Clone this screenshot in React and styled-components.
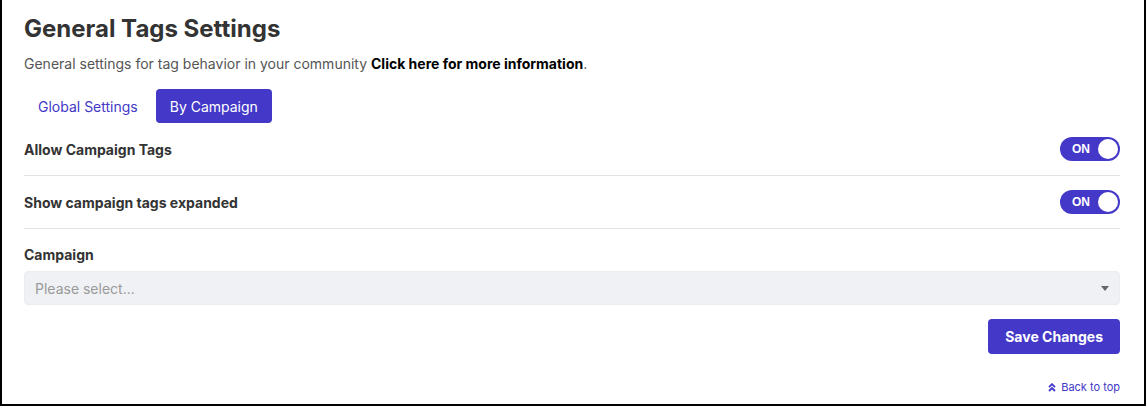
import styled, { createGlobalStyle } from "styled-components";
import { useState } from "react";

const GlobalStyle = createGlobalStyle`
  html, body {
    margin: 0;
    padding: 0;
    background: #fff;
  }
  body {
    font-family: "Inter", "Liberation Sans", sans-serif;
    color: #333;
  }
  * {
    box-sizing: border-box;
  }
`;

const Frame = styled.div`
  width: 1146px;
  height: 406px;
  border: 2px solid #000;
  border-top: none;
  padding: 0 24px 0 22px;
  display: flex;
  flex-direction: column;
`;

const Title = styled.h1`
  margin: 14px 0 0;
  font-size: 24px;
  line-height: 30px;
  font-weight: 700;
  color: #333;
`;

const Subtitle = styled.p`
  margin: 11px 0 0;
  font-size: 14px;
  line-height: 18px;
  color: #555;

  a {
    color: #000;
    font-weight: 700;
    text-decoration: none;
  }
`;

const Tabs = styled.div`
  display: flex;
  gap: 4px;
  margin-top: 16px;
`;

const Tab = styled.button`
  height: 34px;
  padding: 0 14px;
  border: none;
  border-radius: 4px;
  font-family: inherit;
  font-size: 14px;
  cursor: pointer;
  background: ${(p) => (p.$active ? "#4338c8" : "transparent")};
  color: ${(p) => (p.$active ? "#fff" : "#4338c8")};
`;

const Row = styled.div`
  display: flex;
  align-items: center;
  justify-content: space-between;
  height: 53px;
  border-bottom: 1px solid #e2e2e2;
`;

const Label = styled.span`
  font-size: 14px;
  font-weight: 700;
  color: #333;
`;

const Toggle = styled.button`
  width: 60px;
  height: 24px;
  border-radius: 12px;
  border: none;
  background: #4338c8;
  display: flex;
  align-items: center;
  justify-content: space-between;
  padding: 0 2px 0 12px;
  cursor: pointer;
`;

const ToggleText = styled.span`
  color: #fff;
  font-family: inherit;
  font-size: 12px;
  font-weight: 700;
`;

const Knob = styled.span`
  width: 20px;
  height: 20px;
  border-radius: 50%;
  background: #fff;
`;

const Field = styled.div`
  display: flex;
  flex-direction: column;
  padding-top: 17px;
`;

const Select = styled.div`
  margin-top: 8px;
  height: 34px;
  border-radius: 4px;
  background: #f0f1f4;
  border: 1px solid #ebecef;
  display: flex;
  align-items: center;
  justify-content: space-between;
  padding: 0 10px;
  font-size: 14px;
  color: #9a9a9a;
`;

const Caret = styled.span`
  width: 0;
  height: 0;
  border-left: 4px solid transparent;
  border-right: 4px solid transparent;
  border-top: 5px solid #666;
`;

const Actions = styled.div`
  display: flex;
  flex-direction: column;
  align-items: flex-end;
  margin-top: 14px;
`;

const SaveButton = styled.button`
  height: 35px;
  padding: 0 17px;
  border: none;
  border-radius: 4px;
  background: #4338c8;
  color: #fff;
  font-family: inherit;
  font-size: 14px;
  font-weight: 700;
  cursor: pointer;
`;

const BackToTop = styled.a`
  margin-top: 26px;
  display: flex;
  align-items: center;
  gap: 5px;
  font-size: 11px;
  color: #4338c8;
  text-decoration: none;
`;

function Switch({ on, onChange }) {
  return (
    <Toggle onClick={() => onChange(!on)}>
      <ToggleText>{on ? "ON" : "OFF"}</ToggleText>
      <Knob />
    </Toggle>
  );
}

export default function App() {
  const [tab, setTab] = useState("campaign");
  const [allow, setAllow] = useState(true);
  const [expanded, setExpanded] = useState(true);

  return (
    <>
      <GlobalStyle />
      <Frame>
        <Title>General Tags Settings</Title>
        <Subtitle>
          General settings for tag behavior in your community{" "}
          <a href="#">Click here for more information</a>.
        </Subtitle>
        <Tabs>
          <Tab $active={tab === "global"} onClick={() => setTab("global")}>
            Global Settings
          </Tab>
          <Tab $active={tab === "campaign"} onClick={() => setTab("campaign")}>
            By Campaign
          </Tab>
        </Tabs>
        <Row>
          <Label>Allow Campaign Tags</Label>
          <Switch on={allow} onChange={setAllow} />
        </Row>
        <Row>
          <Label>Show campaign tags expanded</Label>
          <Switch on={expanded} onChange={setExpanded} />
        </Row>
        <Field>
          <Label>Campaign</Label>
          <Select>
            Please select...
            <Caret />
          </Select>
        </Field>
        <Actions>
          <SaveButton>Save Changes</SaveButton>
          <BackToTop href="#">
            <svg width="8" height="9" viewBox="0 0 8 9" fill="none" stroke="#4338c8" strokeWidth="1.8">
              <path d="M1 4.2 L4 1.2 L7 4.2" />
              <path d="M1 8 L4 5 L7 8" />
            </svg>
            Back to top
          </BackToTop>
        </Actions>
      </Frame>
    </>
  );
}
